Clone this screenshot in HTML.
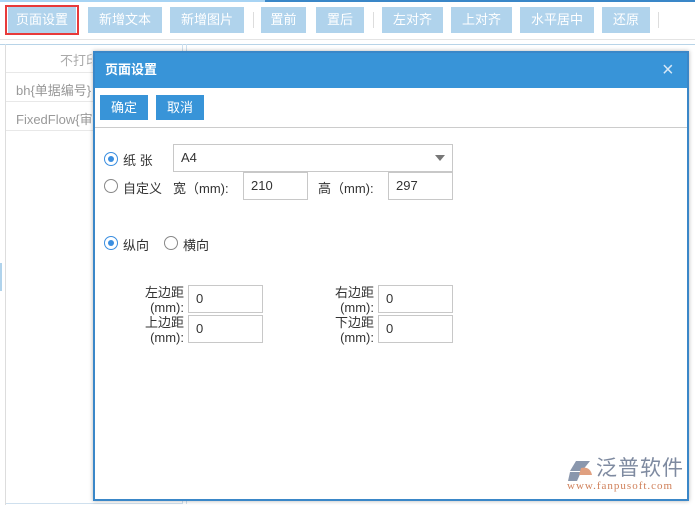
<!DOCTYPE html>
<html><head><meta charset="utf-8"><style>
*{box-sizing:border-box;margin:0;padding:0}
body{width:695px;height:504px;overflow:hidden;background:#fff;font-family:"Liberation Sans","Noto Sans CJK SC",sans-serif;font-size:13px;color:#333;position:relative}
.abs{position:absolute}
.btn{position:absolute;top:7px;height:26px;background:#b0d3ec;color:#fff;font-size:13px;line-height:26px;text-align:center}
.sep{position:absolute;top:12px;width:1px;height:16px;background:#ddd}
.in{position:absolute;border:1px solid #c8c8c8;background:#fff;padding-left:7px;font-size:13px;color:#333}
.radio{position:absolute;width:14px;height:14px;border:1px solid #888;border-radius:50%;background:#fff}
.radio.on{border-color:#3a8ee0}
.radio.on:after{content:"";position:absolute;left:3px;top:3px;width:6px;height:6px;border-radius:50%;background:#3a8ee0}
.lbl{position:absolute;font-size:13px;color:#333}
</style></head><body>
<div class="abs" style="left:0;top:0;width:265px;height:2px;background:#a8d4f4"></div>
<div class="abs" style="left:265px;top:0;width:430px;height:2px;background:#3a87c8"></div>
<div class="abs" style="left:5px;top:5px;width:74px;height:30px;border:2px solid #e83a3a"></div>
<div class="btn" style="left:8px;width:68px">页面设置</div>
<div class="btn" style="left:88px;width:74px">新增文本</div>
<div class="btn" style="left:170px;width:74px">新增图片</div>
<div class="sep" style="left:253px"></div>
<div class="btn" style="left:261px;width:45px">置前</div>
<div class="btn" style="left:316px;width:48px">置后</div>
<div class="sep" style="left:373px"></div>
<div class="btn" style="left:382px;width:61px">左对齐</div>
<div class="btn" style="left:451px;width:61px">上对齐</div>
<div class="btn" style="left:520px;width:74px">水平居中</div>
<div class="btn" style="left:602px;width:48px">还原</div>
<div class="sep" style="left:658px"></div>
<div class="abs" style="left:0;top:39px;width:695px;height:1px;background:#e4e4e4"></div>
<div class="abs" style="left:0;top:44px;width:695px;height:1px;background:#b8d4e8"></div>
<div class="abs" style="left:5px;top:44px;width:178px;height:460px;border:1px solid #cfe0ee;border-top:none"></div>
<div class="abs" style="left:5px;top:45px;width:1px;height:460px;background:#ddd"></div>
<div class="abs" style="left:186px;top:44px;width:1px;height:460px;background:#cfe0ee"></div>
<div class="abs" style="left:0;top:263px;width:2px;height:28px;background:#b0d3ec"></div>
<div class="lbl" style="left:60px;top:50px;color:#aaa">不打印</div>
<div class="abs" style="left:6px;top:72px;width:176px;height:1px;background:#e8e8e8"></div>
<div class="lbl" style="left:16px;top:80px;color:#999">bh{单据编号}</div>
<div class="abs" style="left:6px;top:101px;width:176px;height:1px;background:#e8e8e8"></div>
<div class="lbl" style="left:16px;top:109px;color:#999">FixedFlow{审</div>
<div class="abs" style="left:6px;top:130px;width:176px;height:1px;background:#e8e8e8"></div>

<div class="abs" style="left:93px;top:51px;width:596px;height:450px;border:2px solid #3a87c8;background:#fff;box-shadow:0 0 4px rgba(0,0,0,.3)">
 <div class="abs" style="left:0;top:0;width:592px;height:35px;background:#3894d8;color:#fff;font-weight:bold;font-size:13px;line-height:34px;padding-left:10px">页面设置</div>
 <div class="abs" style="left:567px;top:6px;color:#d8e8f6;font-size:20px;line-height:22px">×</div>
 <div class="abs" style="left:5px;top:42px;width:48px;height:25px;background:#3894d8;color:#fff;text-align:center;line-height:25px">确定</div>
 <div class="abs" style="left:61px;top:42px;width:48px;height:25px;background:#3894d8;color:#fff;text-align:center;line-height:25px">取消</div>
 <div class="abs" style="left:0;top:74px;width:592px;height:1px;background:#ccc"></div>
</div>

<div class="radio on" style="left:104px;top:152px"></div>
<div class="lbl" style="left:123px;top:150px">纸 张</div>
<div class="in" style="left:173px;top:144px;width:280px;height:28px;line-height:26px">A4</div>
<div class="abs" style="left:435px;top:155px;width:0;height:0;border-left:5px solid transparent;border-right:5px solid transparent;border-top:6px solid #777"></div>
<div class="radio" style="left:104px;top:179px"></div>
<div class="lbl" style="left:123px;top:178px">自定义</div>
<div class="lbl" style="left:173px;top:178px">宽（mm):</div>
<div class="in" style="left:243px;top:172px;width:65px;height:28px;line-height:26px">210</div>
<div class="lbl" style="left:318px;top:178px">高（mm):</div>
<div class="in" style="left:388px;top:172px;width:65px;height:28px;line-height:26px">297</div>
<div class="radio on" style="left:104px;top:236px"></div>
<div class="lbl" style="left:123px;top:235px">纵向</div>
<div class="radio" style="left:164px;top:236px"></div>
<div class="lbl" style="left:183px;top:235px">横向</div>

<div class="lbl" style="left:138px;top:285px;width:46px;text-align:right;line-height:15px">左边距<br>(mm):</div>
<div class="in" style="left:188px;top:285px;width:75px;height:28px;line-height:26px">0</div>
<div class="lbl" style="left:138px;top:315px;width:46px;text-align:right;line-height:15px">上边距<br>(mm):</div>
<div class="in" style="left:188px;top:315px;width:75px;height:28px;line-height:26px">0</div>
<div class="lbl" style="left:328px;top:285px;width:46px;text-align:right;line-height:15px">右边距<br>(mm):</div>
<div class="in" style="left:378px;top:285px;width:75px;height:28px;line-height:26px">0</div>
<div class="lbl" style="left:328px;top:315px;width:46px;text-align:right;line-height:15px">下边距<br>(mm):</div>
<div class="in" style="left:378px;top:315px;width:75px;height:28px;line-height:26px">0</div>

<svg class="abs" style="left:566px;top:460px" width="30" height="24" viewBox="0 0 30 24"><path d="M10 1 L24 1 L16 11 L4 11 Z" fill="#8a97ad"/><path d="M4 12 L15 12 L11 21 L2 21 Z" fill="#8a97ad"/><path d="M15 8 Q24 6 26 15 L13 15 Z" fill="#e0a080"/></svg>
<div class="lbl" style="left:596px;top:456px;font-size:21px;color:#7e8aa0;letter-spacing:1px;line-height:26px">泛普软件</div>
<div class="lbl" style="left:567px;top:480px;font-size:11px;color:#d0805a;font-family:'Liberation Serif',serif;letter-spacing:1px">www.fanpusoft.com</div>
</body></html>
